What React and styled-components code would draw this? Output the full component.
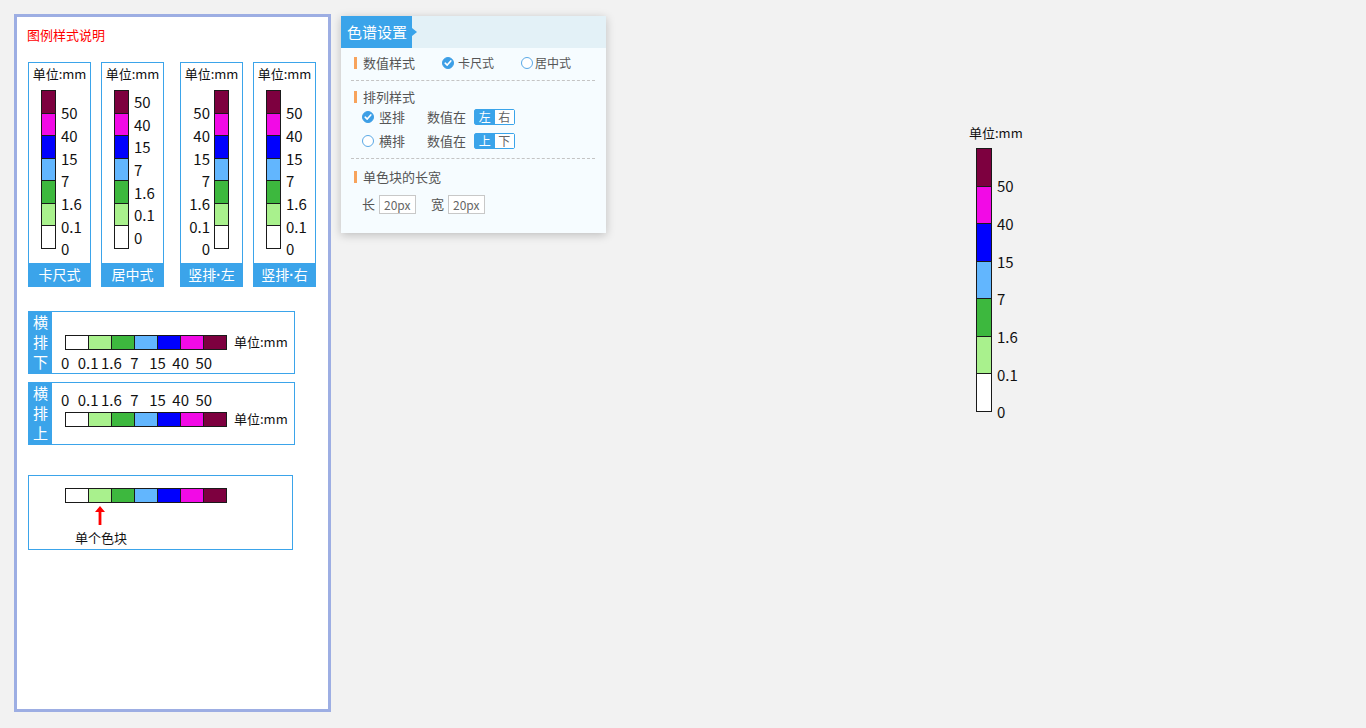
import React from "react";
import styled, { createGlobalStyle } from "styled-components";

const GlobalStyle = createGlobalStyle`
  html, body { margin: 0; padding: 0; background: #f2f2f2; }
  body { font-family: "Noto Sans CJK SC", "Noto Sans", sans-serif; color: #111; }
  * { box-sizing: border-box; }
`;

const COLORS = ["#7d003f", "#f20ae6", "#0000fe", "#62b6fe", "#3db83e", "#a9f18d", "#ffffff"];
const VALUES = ["50", "40", "15", "7", "1.6", "0.1", "0"];
const H_VALUES = ["0", "0.1", "1.6", "7", "15", "40", "50"];
const H_COLORS = [...COLORS].reverse();
const BLUE = "#3ba4ea";

const Page = styled.div`
  display: flex;
  align-items: flex-start;
  padding: 14px;
  min-height: 728px;
`;

const LeftPanel = styled.div`
  width: 317px;
  height: 698px;
  border: 3px solid #9daee3;
  background: #fff;
  padding: 9px 0 0 11px;
  display: flex;
  flex-direction: column;
`;

const Title = styled.div`
  font-size: 13px;
  line-height: 18px;
  color: #f00;
  margin-left: -1px;
`;

const VerticalRow = styled.div`
  display: flex;
  margin-top: 18px;
`;

const VCard = styled.div`
  width: 63px;
  height: 225px;
  border: 1px solid ${BLUE};
  display: flex;
  flex-direction: column;
  margin-right: ${(p) => p.$gap}px;
`;

const Unit = styled.div`
  font-size: 13px;
  line-height: 16px;
  text-align: center;
  white-space: nowrap;
  color: #111;
`;

const CardUnit = styled(Unit)`
  margin-top: 3px;
`;

const BarArea = styled.div`
  display: flex;
  align-items: flex-start;
  margin-top: 8px;
  padding: ${(p) => (p.$side === "left" ? "0 13px 0 0" : "0 0 0 12px")};
  justify-content: ${(p) => (p.$side === "left" ? "flex-end" : "flex-start")};
`;

const VBar = styled.div`
  width: ${(p) => p.$w}px;
  height: ${(p) => p.$h}px;
  border: 1px solid #1a1a1a;
  display: flex;
  flex-direction: column;
  flex-shrink: 0;
`;

const VBlock = styled.div`
  flex: 1;
  background: ${(p) => p.$c};
  & + & { border-top: 1px solid #1a1a1a; }
`;

const VLabels = styled.div`
  display: flex;
  flex-direction: column;
  padding-top: ${(p) => (p.$mid ? 0 : p.$pitch / 2)}px;
  align-items: ${(p) => (p.$right ? "flex-end" : "flex-start")};
  margin: ${(p) => (p.$right ? "0 4px 0 0" : "0 0 0 5px")};
`;

const VLabel = styled.div`
  height: ${(p) => p.$pitch}px;
  display: flex;
  align-items: center;
  font-size: ${(p) => p.$size}px;
  line-height: 1;
  color: #111;
`;

const CardLabel = styled.div`
  margin-top: auto;
  height: 23px;
  background: ${BLUE};
  color: #fff;
  font-size: 14px;
  line-height: 23px;
  text-align: center;
  white-space: nowrap;
`;

const Dot = styled.span`
  font-family: "Liberation Sans", sans-serif;
  font-weight: bold;
`;

const HCard = styled.div`
  width: ${(p) => p.$w || 267}px;
  height: ${(p) => p.$h || 63}px;
  border: 1px solid ${BLUE};
  display: flex;
  margin-top: ${(p) => p.$mt}px;
`;

const SideLabel = styled.div`
  width: 23px;
  background: ${BLUE};
  color: #fff;
  font-size: 15px;
  line-height: 20px;
  text-align: center;
  display: flex;
  flex-direction: column;
`;

const HContent = styled.div`
  display: flex;
  flex-direction: column;
  padding: ${(p) => p.$pt}px 0 0 ${(p) => p.$pl}px;
`;

const HBarRow = styled.div`
  display: flex;
  align-items: center;
  margin-top: ${(p) => p.$mt || 0}px;
`;

const HBar = styled.div`
  width: 162px;
  height: 15px;
  border: 1px solid #1a1a1a;
  display: flex;
  flex-shrink: 0;
`;

const HBlock = styled.div`
  flex: 1;
  background: ${(p) => p.$c};
  & + & { border-left: 1px solid #1a1a1a; }
`;

const HUnit = styled(Unit)`
  margin-left: 7px;
`;

const HLabels = styled.div`
  display: flex;
  margin-left: -11.5px;
  margin-top: ${(p) => p.$mt || 0}px;
`;

const HLabel = styled.div`
  width: 23.14px;
  text-align: center;
  font-size: 15px;
  line-height: 18px;
  color: #111;
  white-space: nowrap;
`;

const ArrowWrap = styled.div`
  margin: 3px 0 0 30px;
  width: 10px;
  height: 19px;
  display: flex;
`;

const Caption = styled.div`
  font-size: 13px;
  line-height: 16px;
  margin: 5px 0 0 10px;
  color: #111;
`;

/* Settings panel */
const Settings = styled.div`
  width: 265px;
  height: 217px;
  margin: 2px 0 0 10px;
  background: #f6fcff;
  box-shadow: 0 2px 9px rgba(0, 0, 0, 0.22);
  display: flex;
  flex-direction: column;
`;

const SHeader = styled.div`
  height: 32px;
  background: #e3f1f7;
  display: flex;
  align-items: center;
`;

const STab = styled.div`
  width: 71px;
  height: 32px;
  background: #3aa4ea;
  color: #fff;
  font-size: 15px;
  line-height: 32px;
  padding-left: 6px;
`;

const Pointer = styled.div`
  width: 0;
  height: 0;
  border-left: 5px solid #3aa4ea;
  border-top: 4px solid transparent;
  border-bottom: 4px solid transparent;
`;

const SRow = styled.div`
  display: flex;
  align-items: center;
  height: 20px;
  line-height: 18px;
  margin-top: ${(p) => p.$mt || 0}px;
  padding-left: ${(p) => p.$pl || 0}px;
  color: #555;
  font-size: 13px;
`;

const Marker = styled.span`
  width: 3px;
  height: 12px;
  background: #f7a35c;
  margin: 0 6px 0 13px;
  flex-shrink: 0;
`;

const SectionTitle = styled.span`
  width: ${(p) => p.$w || "auto"};
`;

const Divider = styled.div`
  margin: ${(p) => p.$mt}px 11px 0 10px;
  border-top: 1px dashed #c4c4c4;
`;

const RadioItem = styled.span`
  display: inline-flex;
  align-items: center;
  width: ${(p) => p.$w}px;
  font-size: ${(p) => p.$fs}px;
  color: #555;
  gap: ${(p) => p.$gap}px;
`;

const RadioCircle = styled.span`
  width: 12px;
  height: 12px;
  border-radius: 50%;
  display: inline-flex;
  flex-shrink: 0;
  background: ${(p) => (p.$on ? "#3d9fe6" : "#fff")};
  border: 1px solid ${(p) => (p.$on ? "#3d9fe6" : "#5aa9e6")};
  align-items: center;
  justify-content: center;
`;

const Muted = styled.span`
  margin-right: 8px;
`;

const Toggle = styled.span`
  display: inline-flex;
  width: 41px;
  height: 16px;
  border: 1px solid #3aa4ea;
  border-radius: 2px;
  background: #fff;
`;

const ToggleHalf = styled.span`
  flex: 1;
  display: flex;
  align-items: center;
  justify-content: center;
  font-size: 12px;
  line-height: 12px;
  background: ${(p) => (p.$on ? "#3aa4ea" : "#fff")};
  color: ${(p) => (p.$on ? "#fff" : "#666")};
`;

const InputLabel = styled.span`
  margin-right: 4px;
  margin-left: ${(p) => p.$ml || 0}px;
`;

const SizeInput = styled.span`
  width: 37px;
  height: 19px;
  border: 1px solid #c8c8c8;
  background: #fff;
  font-size: 12px;
  line-height: 17px;
  padding-left: 4px;
  color: #666;
`;

/* Right legend */
const RightLegend = styled.div`
  margin: 111px 0 0 363px;
  display: flex;
  flex-direction: column;
  align-items: flex-start;
`;

const RightBarRow = styled.div`
  display: flex;
  align-items: flex-start;
  margin: 7px 0 0 7px;
`;

const Check = () => (
  <svg width="8" height="8" viewBox="0 0 8 8">
    <path d="M1.2 4.2 L3.2 6.1 L6.8 1.9" fill="none" stroke="#fff" strokeWidth="1.6" strokeLinecap="round" strokeLinejoin="round" />
  </svg>
);

const Radio = ({ on }) => <RadioCircle $on={on}>{on && <Check />}</RadioCircle>;

function VerticalLegend({ mode, side, pitch, barW, barH, size }) {
  const bar = (
    <VBar $w={barW} $h={barH}>
      {COLORS.map((c, i) => (
        <VBlock key={i} $c={c} />
      ))}
    </VBar>
  );
  const labels = (
    <VLabels $mid={mode === "mid"} $pitch={pitch} $right={side === "left"}>
      {VALUES.map((v) => (
        <VLabel key={v} $pitch={pitch} $size={size}>
          {v}
        </VLabel>
      ))}
    </VLabels>
  );
  return side === "left" ? (
    <>
      {labels}
      {bar}
    </>
  ) : (
    <>
      {bar}
      {labels}
    </>
  );
}

const cards = [
  { label: "卡尺式", mode: "edge", side: "right", gap: 10 },
  { label: "居中式", mode: "mid", side: "right", gap: 16 },
  { label: ["竖排", "左"], mode: "edge", side: "left", gap: 10 },
  { label: ["竖排", "右"], mode: "edge", side: "right", gap: 0 },
];

const HorizontalBar = () => (
  <HBar>
    {H_COLORS.map((c, i) => (
      <HBlock key={i} $c={c} />
    ))}
  </HBar>
);

const HorizontalLabels = ({ mt }) => (
  <HLabels $mt={mt}>
    {H_VALUES.map((v) => (
      <HLabel key={v}>{v}</HLabel>
    ))}
  </HLabels>
);

export default function App() {
  return (
    <>
      <GlobalStyle />
      <Page>
        <LeftPanel>
          <Title>图例样式说明</Title>
          <VerticalRow>
            {cards.map((c, idx) => (
              <VCard key={idx} $gap={c.gap}>
                <CardUnit>单位:mm</CardUnit>
                <BarArea $side={c.side}>
                  <VerticalLegend mode={c.mode} side={c.side} pitch={159 / 7} barW={15} barH={159} size={15} />
                </BarArea>
                <CardLabel>
                  {Array.isArray(c.label) ? (
                    <>
                      {c.label[0]}
                      <Dot>·</Dot>
                      {c.label[1]}
                    </>
                  ) : (
                    c.label
                  )}
                </CardLabel>
              </VCard>
            ))}
          </VerticalRow>

          <HCard $mt={24}>
            <SideLabel>
              <span>横</span>
              <span>排</span>
              <span>下</span>
            </SideLabel>
            <HContent $pt={22} $pl={13}>
              <HBarRow>
                <HorizontalBar />
                <HUnit>单位:mm</HUnit>
              </HBarRow>
              <HorizontalLabels mt={4} />
            </HContent>
          </HCard>

          <HCard $mt={8}>
            <SideLabel>
              <span>横</span>
              <span>排</span>
              <span>上</span>
            </SideLabel>
            <HContent $pt={8} $pl={13}>
              <HorizontalLabels />
              <HBarRow $mt={2}>
                <HorizontalBar />
                <HUnit>单位:mm</HUnit>
              </HBarRow>
            </HContent>
          </HCard>

          <HCard $mt={30} $w={265} $h={75}>
            <HContent $pt={12} $pl={36}>
              <HorizontalBar />
              <ArrowWrap>
                <svg width="10" height="19" viewBox="0 0 10 19">
                  <path d="M5 0 L10 6 L6.4 6 L6.4 19 L3.6 19 L3.6 6 L0 6 Z" fill="#f00" />
                </svg>
              </ArrowWrap>
              <Caption>单个色块</Caption>
            </HContent>
          </HCard>
        </LeftPanel>

        <Settings>
          <SHeader>
            <STab>色谱设置</STab>
            <Pointer />
          </SHeader>

          <SRow $mt={5}>
            <Marker />
            <SectionTitle $w="79px">数值样式</SectionTitle>
            <RadioItem $w={79} $fs={12} $gap={4}>
              <Radio on />
              卡尺式
            </RadioItem>
            <RadioItem $w={70} $fs={12} $gap={2}>
              <Radio />
              居中式
            </RadioItem>
          </SRow>
          <Divider $mt={7} />

          <SRow $mt={6}>
            <Marker />
            <SectionTitle>排列样式</SectionTitle>
          </SRow>
          <SRow $pl={21}>
            <RadioItem $w={65} $fs={13} $gap={5}>
              <Radio on />
              竖排
            </RadioItem>
            <Muted>数值在</Muted>
            <Toggle>
              <ToggleHalf $on>左</ToggleHalf>
              <ToggleHalf>右</ToggleHalf>
            </Toggle>
          </SRow>
          <SRow $pl={21} $mt={4}>
            <RadioItem $w={65} $fs={13} $gap={5}>
              <Radio />
              横排
            </RadioItem>
            <Muted>数值在</Muted>
            <Toggle>
              <ToggleHalf $on>上</ToggleHalf>
              <ToggleHalf>下</ToggleHalf>
            </Toggle>
          </SRow>
          <Divider $mt={7} />

          <SRow $mt={8}>
            <Marker />
            <SectionTitle>单色块的长宽</SectionTitle>
          </SRow>
          <SRow $pl={21} $mt={7}>
            <InputLabel>长</InputLabel>
            <SizeInput>20px</SizeInput>
            <InputLabel $ml={15}>宽</InputLabel>
            <SizeInput>20px</SizeInput>
          </SRow>
        </Settings>

        <RightLegend>
          <Unit>单位:mm</Unit>
          <RightBarRow>
            <VerticalLegend mode="edge" side="right" pitch={264 / 7} barW={16} barH={264} size={15} />
          </RightBarRow>
        </RightLegend>
      </Page>
    </>
  );
}
